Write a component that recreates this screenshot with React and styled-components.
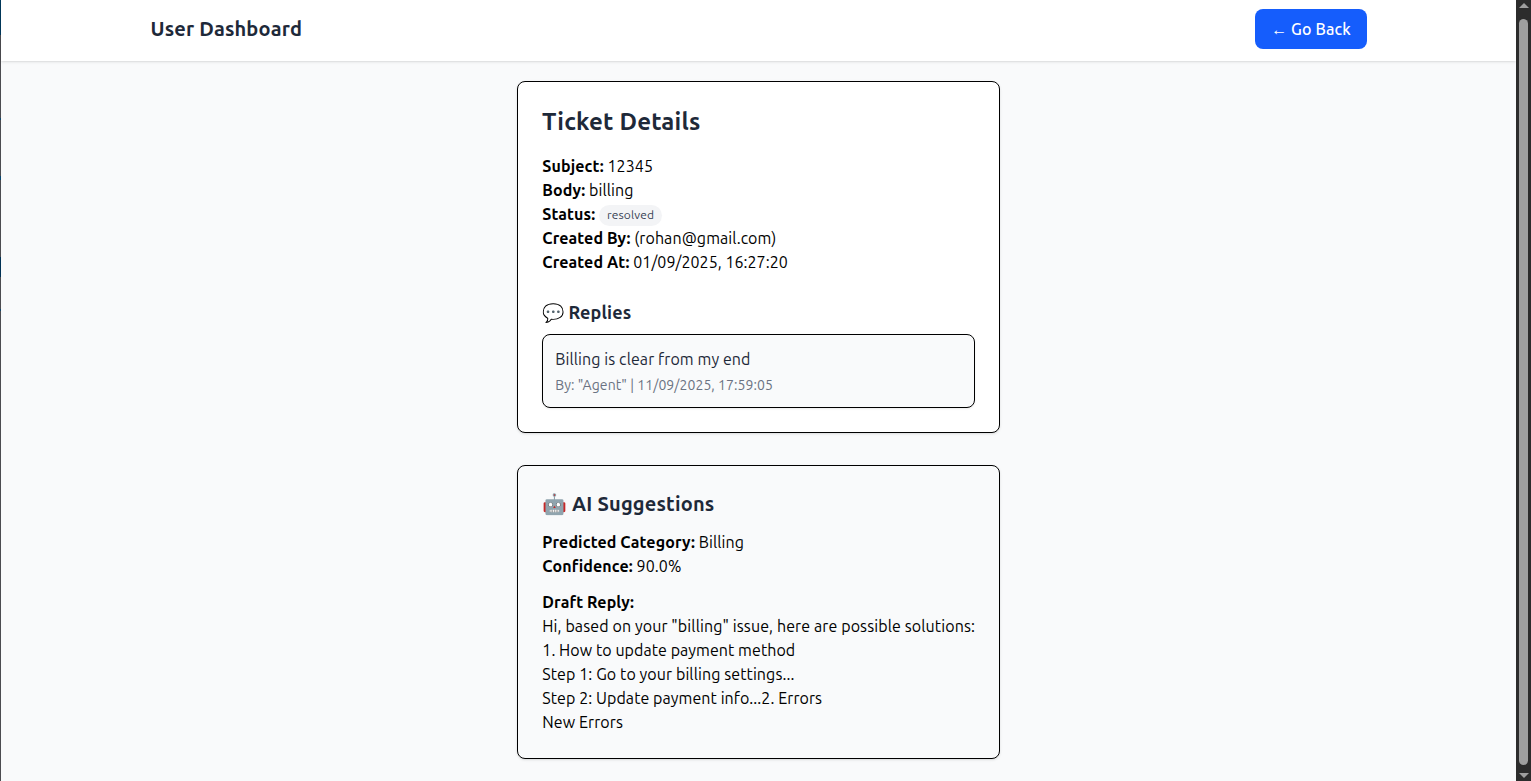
import React from "react";
import styled, { createGlobalStyle } from "styled-components";

const GlobalStyle = createGlobalStyle`
  *, *::before, *::after { box-sizing: border-box; }
  html, body { margin: 0; overflow: hidden; }
  body {
    font-family: Ubuntu, "Noto Sans", sans-serif;
    font-size: 16px;
    line-height: 24px;
    color: #000;
  }
  h1, h2, h3, p { margin: 0; }
`;

const Screen = styled.div`
  display: flex;
  height: 781px;
  width: 1531px;
  background: #f9fafb;
`;

const WindowEdge = styled.div`
  width: 1px;
  flex: none;
  background: linear-gradient(
    #003a5d 0 35px, #4c4c50 35px 118px, #10466a 118px 120px, #4c4c50 120px 176px,
    #07456f 176px 180px, #4c4c50 180px 257px, #003154 257px 277px,
    #4c4c50 277px 309px, #10466a 309px 311px, #4c4c50 311px
  );
`;

const Page = styled.div`
  flex: 1;
  min-width: 0;
  display: flex;
  flex-direction: column;
`;

const Header = styled.header`
  height: 61px;
  flex: none;
  padding: 9px 149px 12px 149.5px;
  display: flex;
  justify-content: space-between;
  align-items: flex-start;
  background: #fff;
  box-shadow: 0 1px 3px rgba(0, 0, 0, 0.1), 0 1px 2px -1px rgba(0, 0, 0, 0.1);
`;

const Brand = styled.h1`
  font-size: 20px;
  line-height: 40px;
  font-weight: 700;
  letter-spacing: 0.15px;
  color: #1e2939;
`;

const BackButton = styled.button`
  height: 40px;
  width: 112px;
  padding: 0;
  border: 0;
  border-radius: 8px;
  background: #155dfc;
  color: #fff;
  font: 500 16px/40px Ubuntu, "Noto Sans", sans-serif;
  letter-spacing: 0.12px;
  text-align: center;
  white-space: nowrap;
`;

const Main = styled.main`
  display: flex;
  flex-direction: column;
  align-items: center;
  gap: 32px;
  padding-top: 20px;
`;

const Card = styled.section`
  width: 483px;
  padding: 24px;
  border: 1px solid #000;
  border-radius: 8px;
  background: ${(p) => (p.$muted ? "#f9fafb" : "#fff")};
  box-shadow: 0 1px 3px rgba(0, 0, 0, 0.1), 0 1px 2px -1px rgba(0, 0, 0, 0.1);
`;

const Title = styled.h2`
  margin-bottom: 16px;
  font-size: 24px;
  line-height: 32px;
  font-weight: 700;
  letter-spacing: 0.2px;
  color: #1e2939;
`;

const Subtitle = styled.h3`
  margin: ${(p) => p.$margin};
  font-size: ${(p) => p.$size}px;
  line-height: 28px;
  font-weight: 700;
  letter-spacing: ${(p) => p.$track}px;
  color: #1e2939;
`;

const Line = styled.p`
  height: 24px;
  padding-left: 0.3px;
  white-space: nowrap;
  letter-spacing: ${(p) => p.$track ?? 0.09}px;
`;

const Label = styled.strong`
  font-weight: 700;
  letter-spacing: 0.11px;
`;

const Badge = styled.span`
  display: inline-block;
  padding: 2px 8px 3px;
  border-radius: 12px;
  background: #f3f4f6;
  color: #364153;
  font-size: 12px;
  line-height: 16px;
  letter-spacing: 0.15px;
  vertical-align: 1px;
`;

const Reply = styled.article`
  height: 74px;
  padding: 12px;
  border: 1px solid #000;
  border-radius: 8px;
  background: #f9fafb;
  color: #1e2939;
  box-shadow: 0 1px 2px rgba(0, 0, 0, 0.08);
`;

const Meta = styled.p`
  margin-top: 4px;
  padding-left: 0.3px;
  font-size: 14px;
  line-height: 20px;
  letter-spacing: 0.06px;
  color: #6a7282;
`;

const Draft = styled.div`
  margin-top: 12px;
`;

const Scrollbar = styled.div`
  width: 15px;
  flex: none;
  display: flex;
  flex-direction: column;
  align-items: center;
  justify-content: space-between;
  padding: 3px 0;
  background: #2c2c2c;
`;

const Thumb = styled.div`
  width: 9px;
  height: 746px;
  margin-top: 2px;
  border-radius: 5px;
  background: #9f9f9f;
`;

const ScrollArrow = styled.svg`
  display: block;
  flex: none;
`;

export default function App() {
  return (
    <>
      <GlobalStyle />
      <Screen>
        <WindowEdge />
        <Page>
          <Header>
            <Brand>User Dashboard</Brand>
            <BackButton>← Go Back</BackButton>
          </Header>
          <Main>
            <Card>
              <Title>Ticket Details</Title>
              <Line><Label>Subject:</Label> 12345</Line>
              <Line><Label>Body:</Label> billing</Line>
              <Line><Label>Status:</Label> <Badge>resolved</Badge></Line>
              <Line><Label>Created By:</Label> (rohan@gmail.com)</Line>
              <Line $track={0.05}><Label>Created At:</Label> 01/09/2025, 16:27:20</Line>
              <Subtitle $size={18} $margin="24px 0 8px" $track={0.12}>💬 Replies</Subtitle>
              <Reply>
                <Line>Billing is clear from my end</Line>
                <Meta>By: "Agent" | 11/09/2025, 17:59:05</Meta>
              </Reply>
            </Card>
            <Card $muted>
              <Subtitle $size={20} $margin="0 0 12px" $track={0.18}>🤖 AI Suggestions</Subtitle>
              <Line><Label>Predicted Category:</Label> Billing</Line>
              <Line><Label>Confidence:</Label> 90.0%</Line>
              <Draft>
                <Line><Label>Draft Reply:</Label></Line>
                <Line $track={0.11}>Hi, based on your "billing" issue, here are possible solutions:</Line>
                <Line $track={0.06}>1. How to update payment method</Line>
                <Line>Step 1: Go to your billing settings...</Line>
                <Line $track={0.07}>Step 2: Update payment info...2. Errors</Line>
                <Line>New Errors</Line>
              </Draft>
            </Card>
          </Main>
        </Page>
        <Scrollbar>
          <ScrollArrow width="10" height="5" viewBox="0 0 10 5">
            <path d="M5 0 10 5H0Z" fill="#9f9f9f" />
          </ScrollArrow>
          <Thumb />
          <ScrollArrow width="10" height="5" viewBox="0 0 10 5">
            <path d="M0 0h10L5 5Z" fill="#9f9f9f" />
          </ScrollArrow>
        </Scrollbar>
      </Screen>
    </>
  );
}
